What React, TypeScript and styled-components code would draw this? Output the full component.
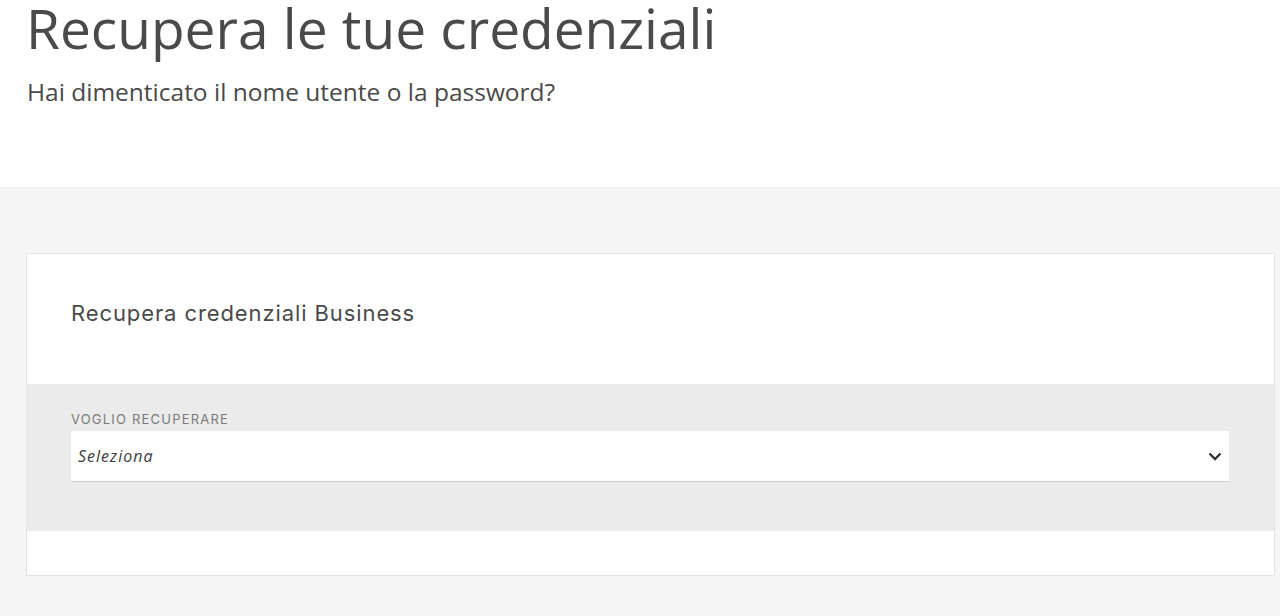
import React from "react";
import styled, { createGlobalStyle } from "styled-components";

const Global = createGlobalStyle`
  html, body { margin: 0; padding: 0; background: #ffffff; }
  body { font-family: "Open Sans", "Noto Sans", sans-serif; color: #4a4a4a; }
  * { box-sizing: border-box; }
`;

const Page = styled.div`
  width: 1280px;
  height: 616px;
  overflow: hidden;
  display: flex;
  flex-direction: column;
`;

const Header = styled.header`
  height: 187px;
  padding: 0 27px;
  display: flex;
  flex-direction: column;
`;

const Title = styled.h1`
  margin: 0 0 0 -1px;
  font-family: "Open Sans", sans-serif;
  font-weight: 400;
  font-size: 55px;
  line-height: 56px;
  color: #4a4a4a;
`;

const Subtitle = styled.p`
  margin: 20px 0 0;
  font-family: "Open Sans", sans-serif;
  font-size: 24.5px;
  line-height: 32px;
  color: #4a4a4a;
`;

const Section = styled.section`
  flex: 1;
  background: #f5f5f5;
  padding: 66px 5px 0 26px;
`;

const Card = styled.div`
  background: #ffffff;
  border: 1px solid #e4e4e4;
  display: flex;
  flex-direction: column;
`;

const CardHead = styled.div`
  height: 130px;
  padding: 44px 44px 0;
`;

const CardTitle = styled.h2`
  margin: 0;
  font-family: "Inter", sans-serif;
  font-weight: 400;
  font-size: 22px;
  line-height: 30px;
  letter-spacing: 0.9px;
  color: #4a4a4a;
`;

const Band = styled.div`
  background: #ebebeb;
  height: 147px;
  padding: 27px 45px 0 44px;
`;

const Label = styled.label`
  display: block;
  font-family: "Inter", sans-serif;
  font-size: 13px;
  line-height: 16px;
  letter-spacing: 1.2px;
  color: #7a7a7a;
  text-transform: uppercase;
  margin-bottom: 4px;
`;

const SelectBox = styled.div`
  height: 51px;
  background: #ffffff;
  border-bottom: 1px solid #cfcfcf;
  display: flex;
  align-items: center;
  justify-content: space-between;
  padding: 0 6px 0 7px;
`;

const Placeholder = styled.span`
  font-family: "Open Sans", sans-serif;
  font-style: italic;
  font-size: 16px;
  letter-spacing: 1px;
  color: #3c3c3c;
`;

const Chevron = styled.svg`
  width: 16px;
  height: 16px;
  color: #333;
`;

const CardFoot = styled.div`
  height: 44px;
`;

export default function App() {
  return (
    <Page>
      <Global />
      <Header>
        <Title>Recupera le tue credenziali</Title>
        <Subtitle>Hai dimenticato il nome utente o la password?</Subtitle>
      </Header>
      <Section>
        <Card>
          <CardHead>
            <CardTitle>Recupera credenziali Business</CardTitle>
          </CardHead>
          <Band>
            <Label>Voglio recuperare</Label>
            <SelectBox>
              <Placeholder>Seleziona</Placeholder>
              <Chevron viewBox="0 0 16 16" fill="none">
                <path d="M2.5 5.5 L8 11 L13.5 5.5" stroke="currentColor" strokeWidth="2.4" strokeLinecap="butt" strokeLinejoin="miter" />
              </Chevron>
            </SelectBox>
          </Band>
          <CardFoot />
        </Card>
      </Section>
    </Page>
  );
}
